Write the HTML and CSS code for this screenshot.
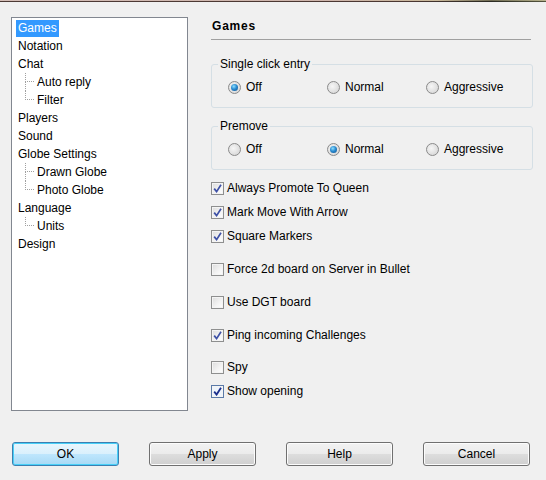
FILE: index.html
```html
<!DOCTYPE html>
<html>
<head>
<meta charset="utf-8">
<link rel="stylesheet" href="styles.css">
</head>
<body>
<div class="topbar"><div class="tb1"></div><div class="tb2"></div></div>
<div class="main">
  <div class="tree">
    <div class="row"><span class="lbl sel">Games</span></div>
    <div class="row"><span class="lbl">Notation</span></div>
    <div class="row"><span class="lbl">Chat</span></div>
    <div class="row child"><span class="conn"><span class="up"></span><span class="down"></span></span><span class="lbl">Auto reply</span></div>
    <div class="row child"><span class="conn"><span class="up"></span><span class="down last"></span></span><span class="lbl">Filter</span></div>
    <div class="row"><span class="lbl">Players</span></div>
    <div class="row"><span class="lbl">Sound</span></div>
    <div class="row"><span class="lbl">Globe Settings</span></div>
    <div class="row child"><span class="conn"><span class="up"></span><span class="down"></span></span><span class="lbl">Drawn Globe</span></div>
    <div class="row child"><span class="conn"><span class="up"></span><span class="down last"></span></span><span class="lbl">Photo Globe</span></div>
    <div class="row"><span class="lbl">Language</span></div>
    <div class="row child"><span class="conn"><span class="up"></span><span class="down last"></span></span><span class="lbl">Units</span></div>
    <div class="row"><span class="lbl">Design</span></div>
  </div>
  <div class="panel">
    <div class="heading">Games</div>
    <div class="rule"></div>
    <fieldset class="group g1">
      <legend>Single click entry</legend>
      <div class="radios">
        <label class="radio"><span class="rb on"></span>Off</label>
        <label class="radio"><span class="rb"></span>Normal</label>
        <label class="radio"><span class="rb"></span>Aggressive</label>
      </div>
    </fieldset>
    <fieldset class="group g2">
      <legend>Premove</legend>
      <div class="radios">
        <label class="radio"><span class="rb"></span>Off</label>
        <label class="radio"><span class="rb on"></span>Normal</label>
        <label class="radio"><span class="rb"></span>Aggressive</label>
      </div>
    </fieldset>
    <div class="checks">
      <label class="chk c1"><span class="cb on"><svg viewBox="0 0 9 9" width="9" height="9"><path d="M1.2 4.6 L3.6 7.6 L8 0.8" fill="none" stroke="#3e51a6" stroke-width="1.7"/></svg></span>Always Promote To Queen</label>
      <label class="chk"><span class="cb on"><svg viewBox="0 0 9 9" width="9" height="9"><path d="M1.2 4.6 L3.6 7.6 L8 0.8" fill="none" stroke="#3e51a6" stroke-width="1.7"/></svg></span>Mark Move With Arrow</label>
      <label class="chk"><span class="cb on"><svg viewBox="0 0 9 9" width="9" height="9"><path d="M1.2 4.6 L3.6 7.6 L8 0.8" fill="none" stroke="#3e51a6" stroke-width="1.7"/></svg></span>Square Markers</label>
      <label class="chk gap"><span class="cb"></span>Force 2d board on Server in Bullet</label>
      <label class="chk gap"><span class="cb"></span>Use DGT board</label>
      <label class="chk gap2"><span class="cb on"><svg viewBox="0 0 9 9" width="9" height="9"><path d="M1.2 4.6 L3.6 7.6 L8 0.8" fill="none" stroke="#3e51a6" stroke-width="1.7"/></svg></span>Ping incoming Challenges</label>
      <label class="chk gap3"><span class="cb"></span>Spy</label>
      <label class="chk"><span class="cb on strong"><svg viewBox="0 0 9 9" width="9" height="9"><path d="M1.2 4.6 L3.6 7.6 L8 0.8" fill="none" stroke="#1c2f8c" stroke-width="1.8"/></svg></span>Show opening</label>
    </div>
  </div>
</div>
<div class="buttons">
  <div class="btn default">OK</div>
  <div class="btn">Apply</div>
  <div class="btn">Help</div>
  <div class="btn">Cancel</div>
</div>
</body>
</html>
```
FILE: styles.css
```css
html, body {
  margin: 0;
  padding: 0;
}
body {
  width: 546px;
  height: 480px;
  background: #f0f0f0;
  font-family: "Liberation Sans", Arial, sans-serif;
  font-size: 12px;
  color: #000;
  overflow: hidden;
}
.topbar { height: 2px; }
.tb1 { height: 1px; background: linear-gradient(90deg, #d3bdb6 0%, #cdb4ab 60%, #c9b89a 80%, #6e6a52 90%, #b9b48e 100%); }
.tb2 { height: 1px; background: linear-gradient(90deg, #4d3a35 0%, #4b3732 75%, #2a2a22 90%, #55553e 100%); }
.main {
  display: flex;
  padding: 15px 0 0 11px;
  height: 394px;
}
.tree {
  box-sizing: border-box;
  width: 177px;
  height: 394px;
  background: #fff;
  border: 1px solid #828790;
  padding: 1px 0 0 4px;
}
.row {
  display: flex;
  align-items: center;
  height: 18px;
}
.lbl {
  display: inline-block;
  padding: 0 2px;
  line-height: 17px;
}
.lbl.sel {
  background: #3399ff;
  color: #fff;
}
.child .conn {
  margin-left: 9px;
  width: 9px;
  height: 18px;
  display: flex;
  flex-direction: column;
  margin-right: 1px;
}
.conn .up {
  height: 8px;
  border-left: 1px dotted #a0a0a0;
  border-bottom: 1px dotted #a0a0a0;
}
.conn .down {
  flex: 1;
  border-left: 1px dotted #a0a0a0;
}
.conn .down.last { border-left-color: transparent; }
.panel {
  margin-left: 23px;
  width: 322px;
}
.heading {
  font-weight: bold;
  letter-spacing: 0.8px;
  padding: 1px 0 0 1px;
  height: 17px;
  line-height: 16px;
}
.rule {
  width: 320px;
  height: 1px;
  background: #a0a0a0;
  margin-top: 4px;
}
.group {
  margin: 17px 0 0 0;
  padding: 9px 0 0 16px;
  border: 1px solid #d5dfe5;
  border-radius: 3px;
  box-sizing: border-box;
}
.group legend {
  padding: 0 2px;
  margin-left: -10px;
  line-height: 14px;
  color: #000;
}
.g1 { height: 51px; }
.g2 { height: 51px; margin-top: 11px; padding-top: 9px; }
.radios {
  display: grid;
  grid-template-columns: 99px 99px 99px;
}
.radio {
  display: flex;
  align-items: center;
  height: 14px;
}
.rb {
  box-sizing: border-box;
  width: 13px;
  height: 13px;
  border-radius: 50%;
  border: 1px solid #8a8a8a;
  background: radial-gradient(circle at 40% 40%, #f6f6f6 0%, #dcdcdc 70%, #cfcfcf 100%);
  margin-right: 5px;
  display: flex;
  align-items: center;
  justify-content: center;
}
.rb.on::after {
  content: "";
  width: 7px;
  height: 7px;
  border-radius: 50%;
  background: radial-gradient(circle at 40% 35%, #8ee0ff 0%, #2a8bd1 45%, #0c4e8a 100%);
}
.checks {
  margin-top: 11px;
  display: flex;
  flex-direction: column;
}
.chk {
  display: flex;
  align-items: center;
  height: 14px;
  margin-top: 10px;
}
.chk.c1 { margin-top: 0; }
.chk.gap { margin-top: 19px; }
.chk.gap2 { margin-top: 19px; }
.chk.gap3 { margin-top: 18px; }
.cb {
  box-sizing: border-box;
  width: 13px;
  height: 13px;
  border: 1px solid #8e8f8f;
  background: linear-gradient(135deg, #dcdcdc 0%, #f4f4f4 60%, #ffffff 100%);
  box-shadow: inset 0 0 0 1px #f4f4f4;
  margin-right: 3px;
  display: flex;
  align-items: center;
  justify-content: center;
}
.cb.strong { border-color: #5a7aa8; background: #eef4fb; }
.cb svg { display: block; }
.buttons {
  display: flex;
  gap: 30px;
  padding: 31px 0 0 12px;
}
.btn {
  box-sizing: border-box;
  width: 107px;
  height: 24px;
  border: 1px solid #707070;
  border-radius: 3px;
  background: linear-gradient(180deg, #f2f2f2 0%, #ebebeb 50%, #dddddd 51%, #cfcfcf 100%);
  box-shadow: inset 0 0 0 1px #fcfcfc;
  text-align: center;
  line-height: 22px;
  font-size: 12px;
}
.btn.default {
  border-color: #3c7fb1;
  background: linear-gradient(180deg, #eaf6fd 0%, #d9f0fc 50%, #bee6fd 51%, #a7d9f5 100%);
  box-shadow: inset 0 0 0 1px #48d0f8;
}
```
